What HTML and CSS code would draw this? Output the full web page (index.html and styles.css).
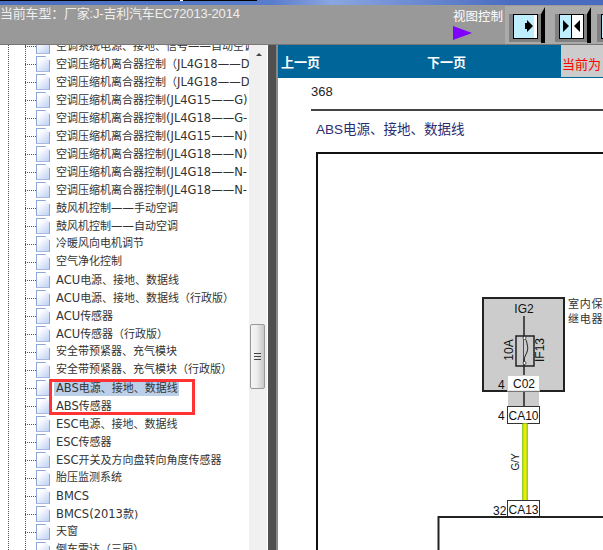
FILE: index.html
```html
<!DOCTYPE html>
<html lang="zh">
<head>
<meta charset="utf-8">
<title>ABS电源、接地、数据线</title>
<link rel="stylesheet" href="styles.css">
</head>
<body>
<div class="topstrip"></div>
<header class="header">
  <div class="model">当前车型：厂家:J-吉利汽车EC72013-2014</div>
  <div class="viewctl">
    <div class="viewlabel">视图控制</div>
    <svg class="tri" width="20" height="16" viewBox="0 0 20 16"><path d="M0 1 19 8 0 15Z" fill="#8000ff"/></svg>
  </div>
  <div class="btn">
    <svg width="46" height="38" viewBox="0 0 46 38">
      <path d="M4 8H36L40 1V37H36V36H4Z" fill="#000"/><rect x="4" y="8" width="32" height="28" fill="#808080"/>
      <rect x="8.500" y="8.500" width="24" height="24" fill="#bfefff" stroke="#000"/><rect x="29" y="9" width="3" height="23" fill="#fff"/>
      <path d="M20 17h2v-3l6 6-6 6v-3h-2z" fill="#000"/>
    </svg>
  </div>
  <div class="btn btn-tight">
    <svg width="46" height="38" viewBox="0 0 46 38">
      <path d="M4 8H36L40 1V37H36V36H4Z" fill="#000"/><rect x="4" y="8" width="32" height="28" fill="#808080"/>
      <rect x="8.500" y="8.500" width="24" height="24" fill="#bfefff" stroke="#000"/><rect x="21" y="9" width="11" height="23" fill="#fff"/><rect x="20" y="9" width="1" height="23" fill="#000"/>
      <path d="M12 14l6 6-6 6zM29 14l-6 6 6 6z" fill="#000"/>
    </svg>
  </div>
  <div class="btn">
    <svg width="46" height="38" viewBox="0 0 46 38">
      <path d="M5 8H37L41 1V37H37V36H5Z" fill="#000"/><rect x="5" y="8" width="32" height="28" fill="#808080"/>
      <rect x="9.500" y="8.500" width="24" height="24" fill="#bfefff" stroke="#000"/>
    </svg>
  </div>
</header>
<main class="body">
  <aside class="tree">
    <div class="guide"></div>
    <ul class="rows">
      <li>空调系统电源、接地、信号<span class="l">——</span>自动空调</li>
      <li>空调压缩机离合器控制（<span class="l">JL4G18——D</span></li>
      <li>空调压缩机离合器控制（<span class="l">JL4G18——D</span></li>
      <li>空调压缩机离合器控制<span class="l">(JL4G15——G)</span></li>
      <li>空调压缩机离合器控制<span class="l">(JL4G18——G-</span></li>
      <li>空调压缩机离合器控制<span class="l">(JL4G15——N)</span></li>
      <li>空调压缩机离合器控制<span class="l">(JL4G18——N)</span></li>
      <li>空调压缩机离合器控制<span class="l">(JL4G18——N-</span></li>
      <li>空调压缩机离合器控制<span class="l">(JL4G18——N-</span></li>
      <li>鼓风机控制<span class="l">——</span>手动空调</li>
      <li>鼓风机控制<span class="l">——</span>自动空调</li>
      <li>冷暖风向电机调节</li>
      <li>空气净化控制</li>
      <li><span class="l">ACU</span>电源、接地、数据线</li>
      <li><span class="l">ACU</span>电源、接地、数据线（行政版）</li>
      <li><span class="l">ACU</span>传感器</li>
      <li><span class="l">ACU</span>传感器（行政版）</li>
      <li>安全带预紧器、充气模块</li>
      <li>安全带预紧器、充气模块（行政版）</li>
      <li><span class="sel"><span class="l">ABS</span>电源、接地、数据线</span></li>
      <li><span class="l">ABS</span>传感器</li>
      <li><span class="l">ESC</span>电源、接地、数据线</li>
      <li><span class="l">ESC</span>传感器</li>
      <li><span class="l">ESC</span>开关及方向盘转向角度传感器</li>
      <li>胎压监测系统</li>
      <li><span class="l">BMCS</span></li>
      <li><span class="l">BMCS(2013</span>款)</li>
      <li>天窗</li>
      <li>倒车雷达（三厢）</li>
    </ul>
    <div class="mark"></div>
  </aside>
  <div class="scroll">
    <div class="up"></div>
    <div class="thumb"><i></i><i></i><i></i></div>
  </div>
  <div class="divider"></div>
  <section class="doc">
    <nav class="nav">
      <span class="prev">上一页</span>
      <span class="next">下一页</span>
      <span class="cur">当前为</span>
    </nav>
    <div class="pagehead">
      <div class="pageno">368</div>
      <div class="rule"></div>
      <div class="title">ABS电源、接地、数据线</div>
    </div>
    <svg class="diagram" width="325" height="407" viewBox="278 143 325 407">
      <path d="M317 551V153H604" fill="none" stroke="#111" stroke-width="2"/>
      <rect x="483" y="298" width="81" height="93" fill="#ccc" stroke="#222" stroke-width="2"/>
      <rect x="508" y="392" width="31" height="15" fill="#ccc"/>
      <path d="M524 316V376M524 391V407" stroke="#222" stroke-width="1.500"/>
      <rect x="516" y="336" width="18" height="30" fill="none" stroke="#222" stroke-width="1.500"/>
      <path d="M524 338c2 2 3 3 3 6 1 3 1 5 0 8-1 3-3 4-3 11" fill="#ccc" stroke="#222"/>
      <circle cx="524.500" cy="338" r="1.500" fill="#fff" stroke="#222" stroke-width=".7"/>
      <circle cx="524.500" cy="363" r="1.500" fill="#fff" stroke="#222" stroke-width=".7"/>
      <rect x="507.500" y="375.500" width="32" height="15.500" fill="#fff" stroke="#ccc"/>
      <rect x="507.500" y="406.500" width="32" height="17" fill="#fff" stroke="#333"/>
      <rect x="522" y="423.500" width="6" height="77" fill="#9c3"/>
      <rect x="523.500" y="423.500" width="3" height="77" fill="#e8f000"/>
      <rect x="507.500" y="500.500" width="32" height="17" fill="#fff" stroke="#333"/>
      <path d="M603 517H438.500V551" fill="none" stroke="#222" stroke-width="2"/>
      <g class="lab">
        <text x="524" y="313" text-anchor="middle">IG2</text>
        <text x="524" y="388" text-anchor="middle">C02</text>
        <text x="523.500" y="420" text-anchor="middle">CA10</text>
        <text x="523.500" y="514" text-anchor="middle">CA13</text>
        <text x="498" y="389">4</text>
        <text x="498" y="420">4</text>
        <text x="493" y="515">32</text>
        <text transform="translate(513 350) rotate(-90)" text-anchor="middle">10A</text>
        <text transform="translate(544 350) rotate(-90)" text-anchor="middle">IF13</text>
        <text transform="translate(519 462) rotate(-90)" text-anchor="middle" class="small">G/Y</text>
      </g>
      <g class="cjk">
        <text x="568" y="308">室内保险丝</text>
        <text x="568" y="323">继电器</text>
      </g>
    </svg>
  </section>
</main>
</body>
</html>
```
FILE: styles.css
```css
* { box-sizing: border-box; }
html, body { margin: 0; padding: 0; }
body {
  width: 603px;
  height: 550px;
  overflow: hidden;
  background: #fff;
  font-family: "Liberation Sans", "Noto Sans CJK SC", sans-serif;
}
.topstrip {
  height: 5px;
  background:
    linear-gradient(90deg, #000 0 180px, #fff 180px 183px, #000 183px 257px, transparent 257px) 0 0 / 100% 1px no-repeat,
    linear-gradient(90deg, #4a6cc0, #5a7ccc 45%, #8aa6e0 55%, #4a6cc0 85%);
}
.header {
  height: 40px;
  background: #999;
  border-bottom: 1px solid #777;
  display: flex;
  overflow: hidden;
}
.model {
  width: 453px;
  flex: none;
  color: #eee;
  font-size: 13px;
  letter-spacing: -.2px;
  line-height: 16px;
  padding-top: 1px;
}
.viewctl { width: 52px; flex: none; color: #fff; }
.viewlabel { font-size: 12.500px; line-height: 16px; white-space: nowrap; padding-top: 4px; height: 20px; }
.tri { display: block; }
.btn { width: 46px; height: 38px; flex: none; background: #aaa; margin-top: 1px; }
.btn-tight { width: 41px; overflow: hidden; }
.btn svg { display: block; }
.body { display: flex; height: 505px; }
.tree {
  width: 249px;
  flex: none;
  position: relative;
  overflow: hidden;
  background: #fff;
}
.guide {
  position: absolute;
  left: 8px;
  top: 0;
  bottom: 0;
  border-left: 1px dotted #555;
}
.rows {
  list-style: none;
  margin: -8px 0 0;
  padding: 0 0 0 25px;
  background: repeating-linear-gradient(#555 0 1px, transparent 1px 2px) 25px 0 / 1px 100% no-repeat;
}
.rows li {
  height: 18px;
  line-height: 18px;
  padding-left: 31px;
  font-family: "DejaVu Sans", "Noto Sans CJK SC", sans-serif;
  font-size: 11px;
  color: #333;
  white-space: nowrap;
  position: relative;
}
.l { font-size: 11.500px; }
.rows li::before {
  content: "";
  position: absolute;
  left: 0;
  top: 9px;
  width: 11px;
  border-top: 1px dotted #555;
}
.rows li::after {
  content: "";
  position: absolute;
  left: 11px;
  top: 1px;
  width: 12px;
  height: 14px;
  background-origin: border-box;
  background-image:
    linear-gradient(225deg, #8fa5d8 0 3px, transparent 3px),
    linear-gradient(135deg, #fff 25%, #b8ccf4);
  border: 1px solid #8fa5d8;
  border-bottom-color: #a8b8e0;
  clip-path: polygon(0 0, 65% 0, 100% 28%, 100% 100%, 0 100%);
}
.sel { background: #bccfe9; padding: 1px 1px 1px 2px; margin-left: -2px; }
.mark {
  position: absolute;
  left: 49px;
  top: 334px;
  width: 146px;
  height: 36px;
  border: 3px solid #f33;
}
.scroll {
  width: 19px;
  flex: none;
  background: linear-gradient(90deg, #f0f0f0 0 18px, #fff 18px);
  position: relative;
}
.up {
  position: absolute;
  left: 7px;
  top: 8px;
  border: 3px solid transparent;
  border-top: 0;
  border-bottom: 3px solid #444;
}
.thumb {
  position: absolute;
  left: 1px;
  top: 279px;
  width: 15px;
  height: 65px;
  border: 1px solid #999;
  border-radius: 2px;
  background: linear-gradient(90deg, #f4f4f4, #eee 40%, #c8c8cc);
  display: flex;
  flex-direction: column;
  justify-content: center;
  gap: 2px;
  align-items: center;
}
.thumb i { display: block; width: 7px; height: 1px; background: #444; }
.divider {
  width: 10px;
  flex: none;
  background: #505050;
  border-right: 2px solid #888;
}
.doc { flex: 1; min-width: 0; position: relative; overflow: hidden; }
.nav {
  height: 33px;
  background: #069;
  display: flex;
  align-items: center;
  color: #fff;
  font-size: 13px;
  font-weight: bold;
}
.prev { margin-left: 3px; width: 146px; flex: none; }
.next { width: 134px; flex: none; }
.cur {
  flex: 1;
  align-self: stretch;
  background: #ccc;
  color: #f00;
  font-weight: normal;
  line-height: 40px;
  padding-left: 1px;
  white-space: nowrap;
  margin-bottom: 1px;
}
.pagehead { padding-left: 33px; height: 65px; }
.pageno { font-size: 13px; line-height: 16px; padding-top: 6px; height: 31px; color: #222; }
.rule { height: 2px; background: #444; }
.title {
  font-size: 13.500px;
  color: #2c2c70;
  padding: 11px 0 0 5px;
  line-height: 16px;
}
.diagram { display: block; }
.lab text { font: 12px "Liberation Sans", sans-serif; fill: #111; }
.lab text.small { font-size: 10px; }
.cjk text { font: 11px "Noto Sans CJK SC", sans-serif; fill: #333; letter-spacing: .7px; }
```
